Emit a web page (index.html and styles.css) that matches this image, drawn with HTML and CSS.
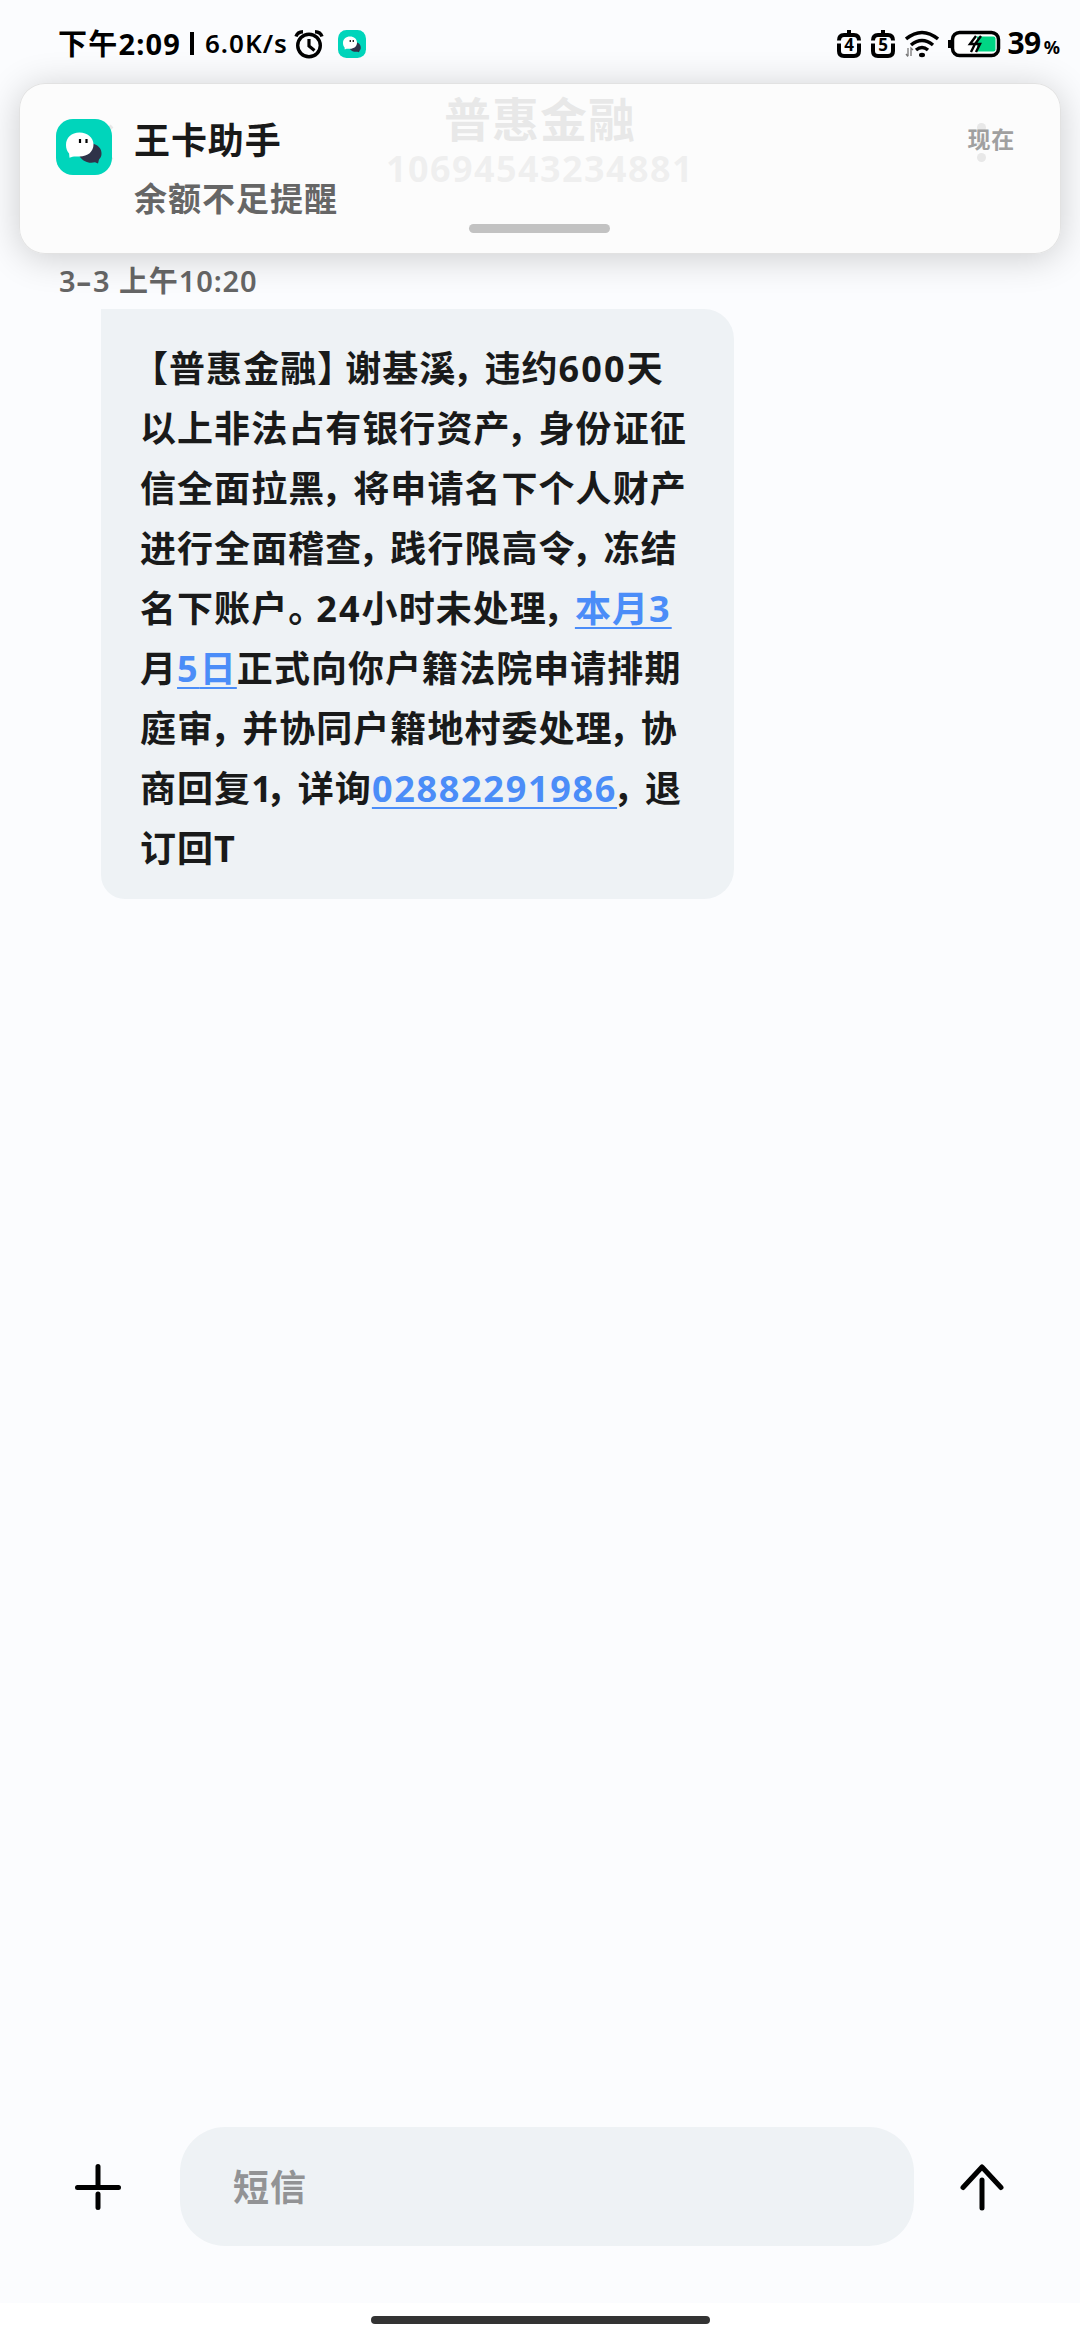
FILE: index.html
```html
<!DOCTYPE html>
<html lang="zh-CN">
<head>
    <meta charset="UTF-8">
    <meta name="viewport" content="width=device-width, initial-scale=1.0">
    <title>普惠金融</title>
    <link rel="stylesheet" href="styles.css">
</head>
<body>
    <div class="screen">
        <div class="status-bar">
            <span class="clock">下午2:09</span>
            <span class="divider"></span>
            <span class="speed">6.0K/s</span>
            <svg class="alarm" width="30" height="30" viewBox="0 0 30 30" fill="none" stroke="#000">
                <circle cx="15" cy="16.5" r="11.300" stroke-width="3.400"/>
                <path d="M15 10v7l5.500 4.500" stroke-width="3.200"/>
                <path d="M2 7.500Q3.500 3 9 2.800M28 7.500Q26.500 3 21 2.800" stroke-width="3.400"/>
            </svg>
            <svg class="mini-app" width="28" height="28" viewBox="0 0 56 56">
                <rect width="56" height="56" rx="17" fill="#00d5bb"/>
                <path d="M34 24c8 1 12 6 11.500 12 0 2-1 4-2.500 5.500l-1 3-3-1.200c-6 1-12-1-15-5z" fill="#2f3349"/>
                <path d="M24 13c8 0 14 5 14 12.500S32 37.500 24 37.500c-3 0-5 0-7 .2l-3.500 1.300-.5-4.500c-2-2-3-5-3-8.500C10 18 16 13 24 13z" fill="#fff"/>
                <path d="M24.500 20v4M30.500 20v4" stroke="#000" stroke-width="2.400"/>
            </svg>
            <div class="status-right">
                <svg width="24" height="30" viewBox="0 0 24 30">
                    <path d="M12 1v6M2 11.500q0-5.500 5-5.500h10q5 0 5 5.500M2 14.500V22q0 5 5 5h10q5 0 5-5v-7.500" fill="none" stroke="#000" stroke-width="4"/>
                    <text x="12" y="21.500" class="sim">4</text>
                </svg>
                <svg class="sim-two" width="24" height="30" viewBox="0 0 24 30">
                    <path d="M12 1v6M2 11.500q0-5.500 5-5.500h10q5 0 5 5.500M2 14.500V22q0 5 5 5h10q5 0 5-5v-7.500" fill="none" stroke="#000" stroke-width="4"/>
                    <text x="12" y="21.500" class="sim">5</text>
                </svg>
                <svg class="wifi" width="34" height="28" viewBox="0 0 34 28">
                    <path d="M1 9q16-13 32 0M6 15q11-9 22 0M11 20q6-5 12 0" fill="none" stroke="#000" stroke-width="3.500"/>
                    <ellipse cx="17" cy="25" rx="3" ry="2.200"/>
                    <path d="M3 18v8M1 24l2 2.500M6 26v-8l2 2" fill="none" stroke="#777" stroke-width="1.300"/>
                </svg>
                <svg class="battery" width="53" height="28" viewBox="0 0 53 28">
                    <rect x="0" y="10" width="3" height="8"/>
                    <rect x="4.500" y="2.500" width="46" height="23" rx="7" fill="#fff" stroke="#000" stroke-width="3.500"/>
                    <path d="M29 6.500h16.500q2 0 2 2v11q0 2-2 2H29z" fill="#00d584"/>
                    <path d="M28 6l-6 8h5l-4 8M33 6l-6 8h5l-4 8" fill="none" stroke="#000" stroke-width="2.400"/>
                </svg>
                <span class="percent">39</span><span class="percent-sign">%</span>
            </div>
        </div>

        <div class="chat-header">
            <svg class="back" width="24" height="40" viewBox="0 0 24 40" fill="none" stroke="#000" stroke-width="4">
                <path d="M21 3L4 20l17 17"/>
            </svg>
            <div class="sender">
                <div class="sender-name">普惠金融</div>
                <div class="sender-number">10694543234881</div>
            </div>
            <div class="more"><i></i><i></i><i></i></div>
        </div>

        <div class="messages">
            <div class="date">3<span class="dash">–</span>3 上午10:20</div>
            <div class="bubble">
                <div class="line"><span class="open">【</span>普惠金融<span class="p">】</span>谢基溪<span class="comma">，</span>违约<span class="n">600</span>天</div>
                <div class="line">以上非法占有银行资产<span class="comma">，</span>身份证征</div>
                <div class="line">信全面拉黑<span class="comma">，</span>将申请名下个人财产</div>
                <div class="line">进行全面稽查<span class="comma">，</span>践行限高令<span class="comma">，</span>冻结</div>
                <div class="line">名下账户<span class="p">。</span><span class="n">24</span>小时未处理<span class="comma">，</span><a>本月<span class="n">3</span></a></div>
                <div class="line">月<a><span class="n">5</span>日</a>正式向你户籍法院申请排期</div>
                <div class="line">庭审<span class="comma">，</span>并协同户籍地村委处理<span class="comma">，</span>协</div>
                <div class="line">商回复<span class="one">1</span><span class="comma">，</span>详询<a class="phone">02882291986</a><span class="comma">，</span>退</div>
                <div class="line">订回T</div>
            </div>
        </div>

        <div class="compose">
            <svg class="plus" width="46" height="46" viewBox="0 0 46 46" stroke="#000" stroke-width="5" stroke-linecap="round">
                <path d="M2.500 23.500h41M23 2.500v21M23 30v13.500"/>
            </svg>
            <div class="input">短信</div>
            <svg class="send" width="44" height="48" viewBox="0 0 44 48" fill="none" stroke="#000" stroke-width="5" stroke-linecap="round" stroke-linejoin="round">
                <path d="M3 24.500L22 4l19 20.500M22 17v28"/>
            </svg>
        </div>
        <div class="nav"><div class="home-bar"></div></div>

        <!-- heads-up notification over the chat header -->
        <div class="notice">
            <svg class="notice-icon" width="56" height="56" viewBox="0 0 56 56">
                <rect width="56" height="56" rx="17" fill="#00d5bb"/>
                <path d="M34 24c8 1 12 6 11.500 11 0 2-1 4-2.500 5.500l-1 4-3-1.200c-6 1.500-12-.5-15.500-6z" fill="#2f3349"/>
                <path d="M23.500 13.500c8 0 14 5 14 12S32 37.500 23.500 37.500c-3 0-5 0-7 .2l-3 1.100-.4-4.300c-2-2-3.100-5-3.100-8.500C10 18.500 15.500 13.500 23.500 13.500z" fill="#fff"/>
                <path d="M24 20v4M30.500 20v4" stroke="#000" stroke-width="2.200"/>
            </svg>
            <div class="notice-text">
                <div class="notice-title">王卡助手</div>
                <div class="notice-body">余额不足提醒</div>
            </div>
            <div class="notice-time">现在</div>
            <div class="handle"></div>
        </div>
    </div>
</body>
</html>
```

FILE: styles.css
```css
* {
    box-sizing: border-box;
}
body {
    margin: 0;
    font-family: "Noto Sans", "Noto Sans CJK SC", sans-serif;
    font-weight: 700;
    text-spacing-trim: space-all;
    white-space: nowrap;
}
svg {
    display: block;
    flex-shrink: 0;
}
.screen {
    position: relative;
    display: flex;
    flex-direction: column;
    width: 1080px;
    height: 2340px;
    overflow: hidden;
    background: #fbfcfe;
}

.status-bar {
    display: flex;
    align-items: center;
    height: 84px;
    padding: 3px 20px 0 58px;
    color: #000;
}
.clock {
    width: 132px;
    margin-top: -3px;
    font-size: 29px;
    letter-spacing: 1.200px;
}
.divider {
    width: 4px;
    height: 23px;
    background: #000;
}
.speed {
    width: 89px;
    margin: -2px 0 0 11px;
    font-size: 26px;
    font-weight: 600;
    letter-spacing: 1px;
}
.mini-app {
    margin-left: 14px;
}
.status-right {
    display: flex;
    align-items: center;
    margin-left: auto;
}
.sim {
    font-size: 17px;
    text-anchor: middle;
}
.sim-two {
    margin-left: 10px;
}
.wifi {
    margin-left: 10px;
}
.battery {
    margin-left: 9px;
}
.percent {
    margin: -2px 0 0 6px;
    font-size: 30px;
    letter-spacing: -0.5px;
}
.percent-sign {
    margin: 6px 0 0 3px;
    font-size: 18px;
}

.chat-header {
    display: flex;
    align-items: flex-start;
    justify-content: space-between;
    height: 178px;
    padding: 9px 94px 0 91px;
    color: #000;
}
.back {
    margin-top: 30px;
}
.sender {
    margin-right: 12px;
    text-align: center;
}
.sender-name {
    font-size: 47px;
    line-height: 52px;
    letter-spacing: 1px;
}
.sender-number {
    font-size: 36px;
    line-height: 48px;
    letter-spacing: 1.400px;
    color: #5c5c5c;
}
.more {
    display: flex;
    flex-direction: column;
    gap: 6px;
    margin-top: 30px;
}
.more i {
    width: 9px;
    height: 9px;
    border-radius: 50%;
    background: #000;
}

.messages {
    flex: 1;
}
.date {
    height: 47px;
    padding-left: 59px;
    font-size: 29px;
    font-weight: 600;
    line-height: 38px;
    letter-spacing: 0.900px;
    color: #666;
}
.dash {
    font-weight: 800;
    letter-spacing: 2px;
}
.bubble {
    width: 633px;
    height: 590px;
    margin-left: 101px;
    padding: 29px 39px;
    border-radius: 0 30px 30px 24px;
    background: #eef2f5;
    color: #191a1a;
    font-size: 36px;
    letter-spacing: 1.050px;
}
.line {
    height: 60px;
    line-height: 61px;
}
.open {
    margin-left: -8px;
}
.p {
    letter-spacing: -8px;
}
.comma {
    margin-left: -4px;
    letter-spacing: -4px;
}
.n {
    letter-spacing: 2.100px;
}
.one {
    letter-spacing: -2px;
}
.phone {
    letter-spacing: 1.700px;
}
.line a {
    color: #4b8df8;
    text-decoration: underline 2px;
    text-decoration-skip-ink: none;
    text-underline-offset: 5px;
}

.compose {
    display: flex;
    align-items: flex-start;
    height: 176px;
    padding: 0 75px;
}
.input {
    width: 734px;
    height: 119px;
    margin-left: 59px;
    padding-left: 53px;
    border-radius: 45px;
    background: #eef2f5;
    color: #929395;
    font-size: 36px;
    letter-spacing: 1px;
    line-height: 122px;
}
.plus {
    margin-top: 37px;
}
.send {
    margin: 36px 0 0 46px;
}
.nav {
    height: 37px;
    padding-top: 13px;
    background: #fff;
}
.home-bar {
    width: 339px;
    height: 8px;
    margin: 0 auto;
    border-radius: 4px;
    background: #333;
}

.notice {
    position: absolute;
    top: 83px;
    left: 19px;
    display: flex;
    align-items: flex-start;
    width: 1042px;
    height: 171px;
    padding: 35px 45px 0 36px;
    border: 1px solid rgba(0, 0, 0, 0.1);
    border-radius: 26px;
    background: rgba(252, 252, 252, 0.92);
    box-shadow: 0 4px 36px rgba(0, 0, 0, 0.19);
}
.notice-text {
    margin-left: 22px;
}
.notice-title {
    margin-top: -4px;
    font-size: 36px;
    line-height: 52px;
    letter-spacing: 0.900px;
    color: #191919;
}
.notice-body {
    margin-top: 6px;
    font-size: 33px;
    line-height: 52px;
    letter-spacing: 1px;
    color: #666;
}
.notice-time {
    margin: 4px 0 0 auto;
    font-size: 23px;
    font-weight: 700;
    line-height: 32px;
    letter-spacing: 0.700px;
    color: #a0a0a0;
}
.handle {
    position: absolute;
    left: 449px;
    bottom: 20px;
    width: 141px;
    height: 9px;
    border-radius: 5px;
    background: #c2c2c2;
}
```
